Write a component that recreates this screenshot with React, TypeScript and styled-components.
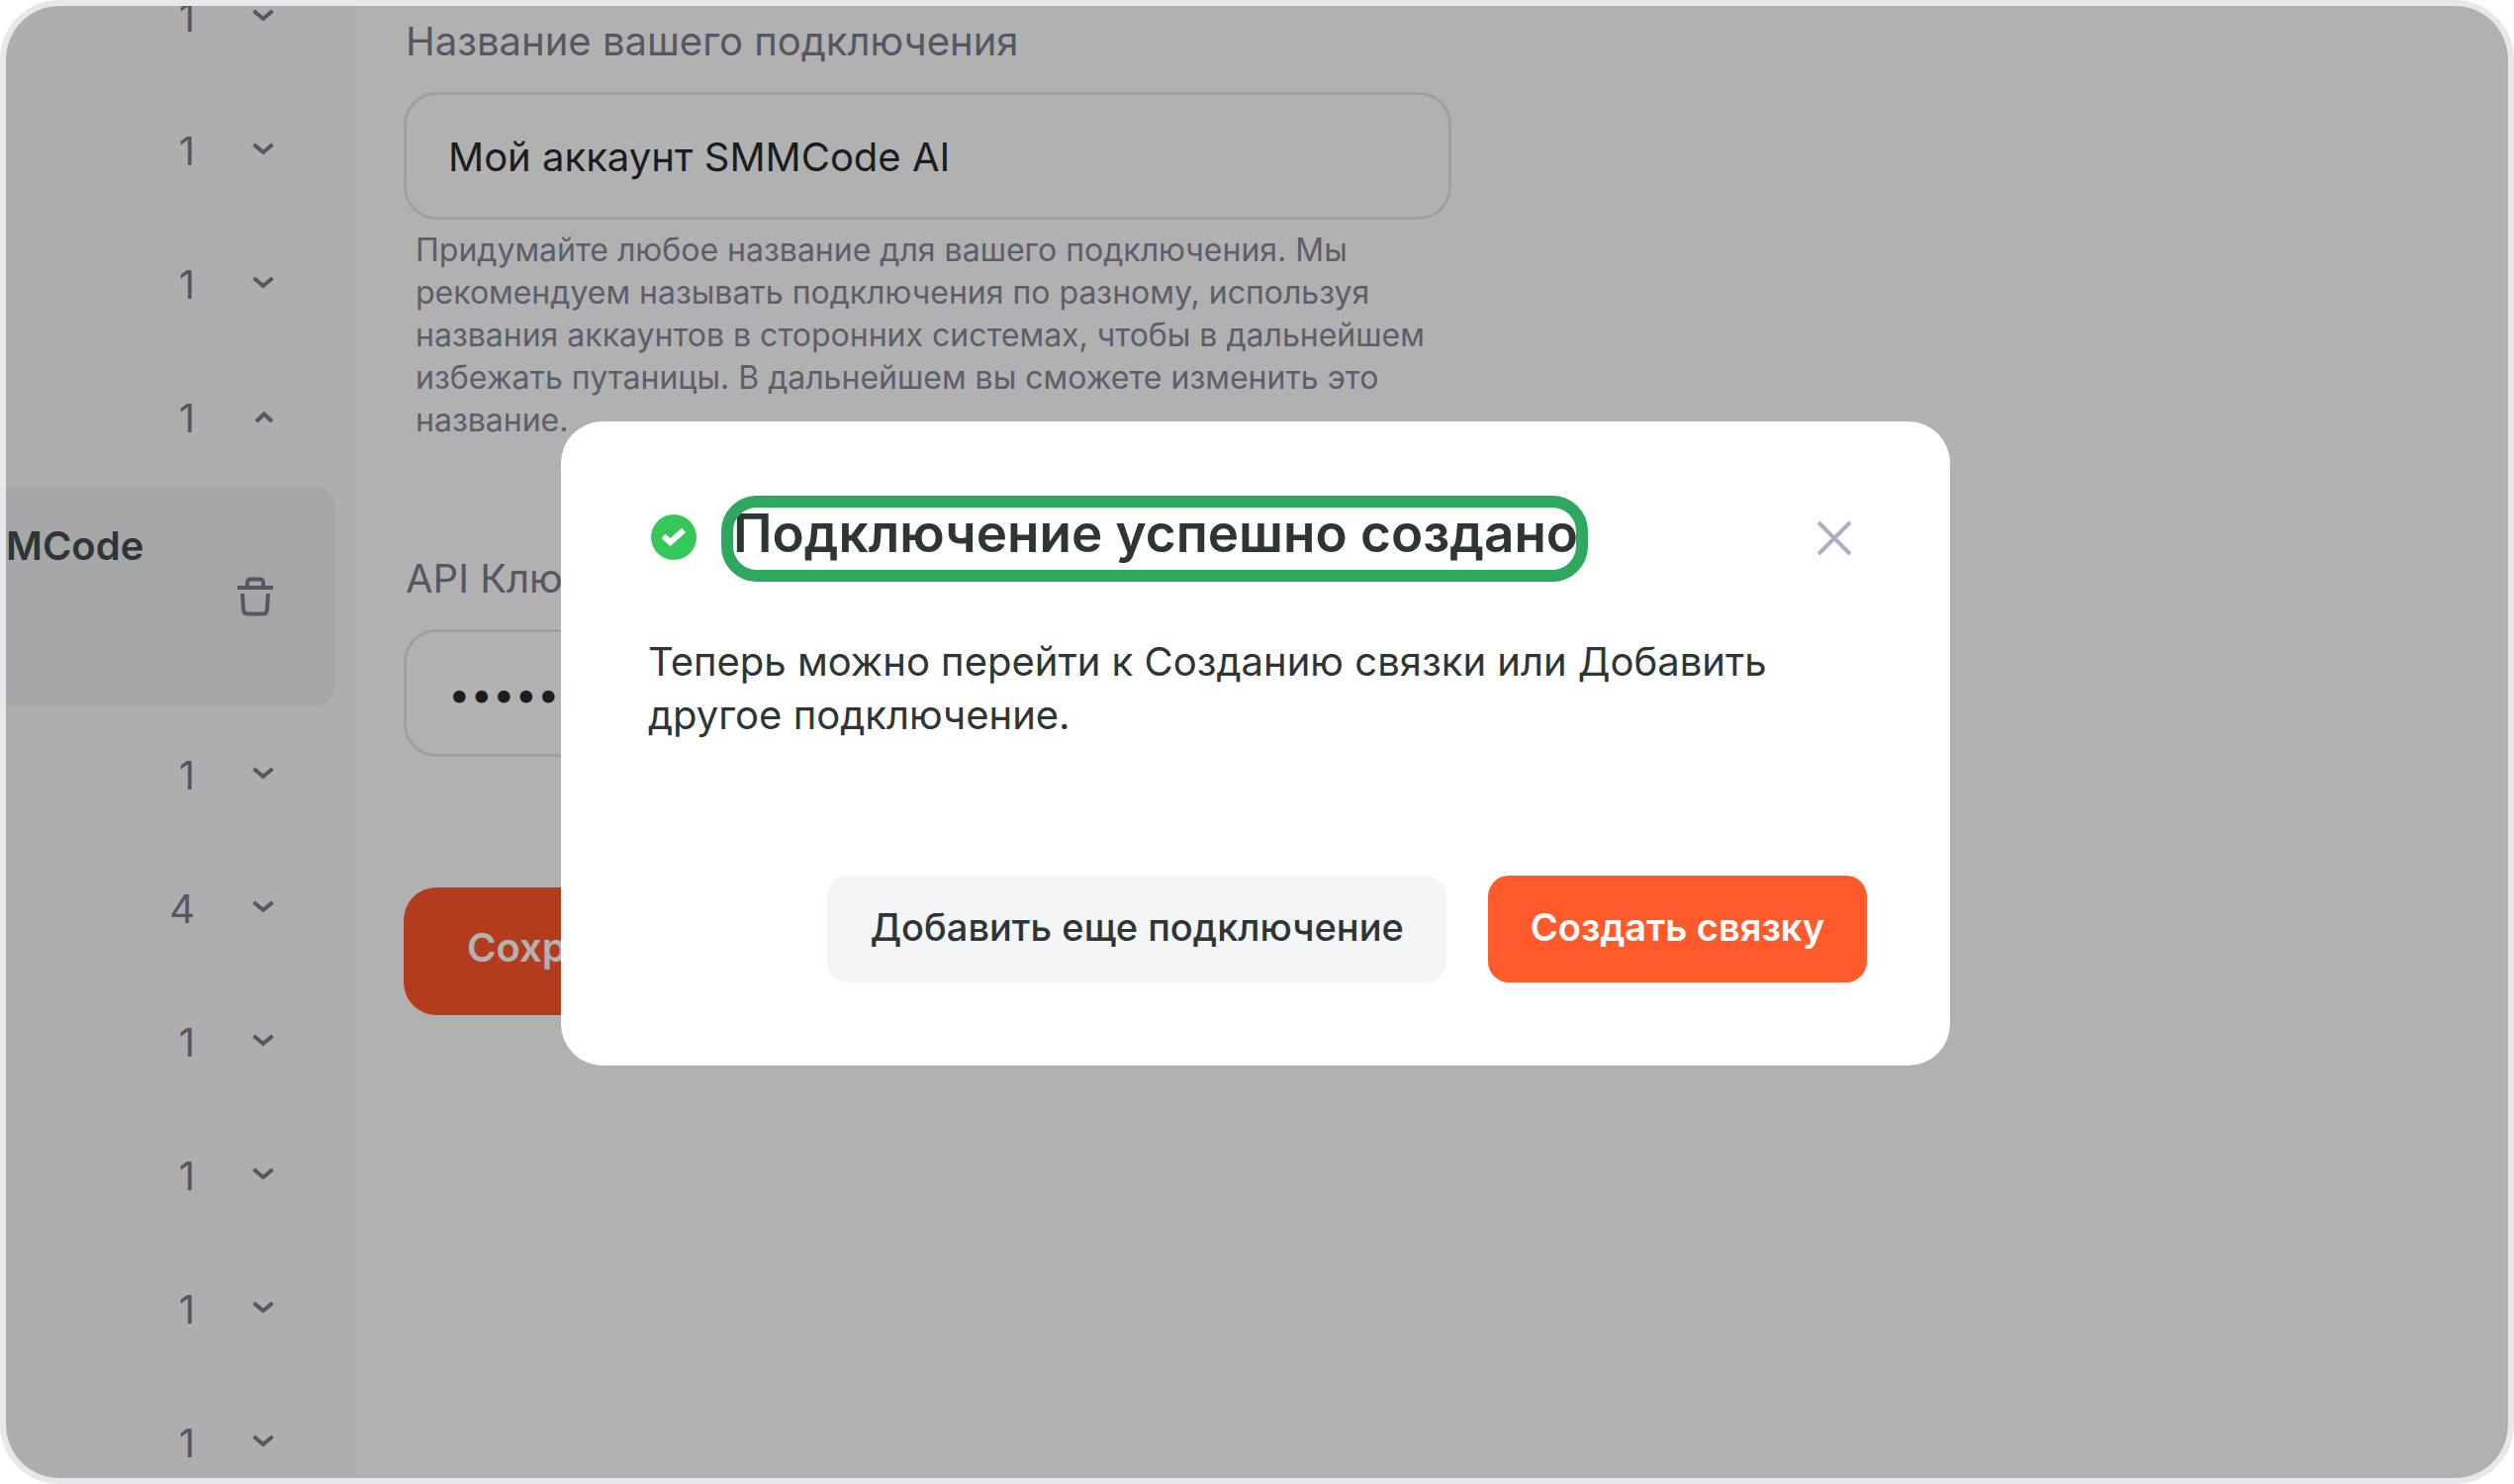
import React from "react";
import styled, { createGlobalStyle } from "styled-components";

const GlobalStyle = createGlobalStyle`
  *, *::before, *::after { box-sizing: border-box; }
  body { margin: 0; background: #ffffff; }
  body, button, input {
    font-family: Inter, "Liberation Sans", sans-serif;
    font-size: 40px;
    line-height: 54px;
  }
  button { border: 0; padding: 0; background: none; cursor: pointer; }
`;

const Frame = styled.div`
  position: relative;
  display: flex;
  height: 100vh;
  overflow: hidden;
  border: 6px solid #e6e8ed;
  border-radius: 60px;
  background: #fefefe;
`;

const Sidebar = styled.nav`
  flex: 0 0 354px;
  background: #f9f9f9;
  overflow: hidden;
`;

const GroupList = styled.ul`
  list-style: none;
  margin: -56px 0 0;
  padding: 0;
`;

const GroupToggle = styled.button`
  display: flex;
  align-items: center;
  justify-content: flex-end;
  gap: 57px;
  width: 100%;
  height: 135px;
  padding-right: 82px;
  color: #7b7d8e;
`;

const ActiveItem = styled.div`
  display: flex;
  justify-content: space-between;
  height: 222px;
  margin: 2px 21px 2px 0;
  padding: 33px 63px 0 0;
  border-radius: 0 21px 21px 0;
  background: #eceff1;
`;

const ActiveName = styled.span`
  font-weight: 600;
  color: #424c4c;
`;

const DeleteButton = styled.button`
  align-self: flex-start;
  display: flex;
  margin-top: 57px;
  color: #7b7d8e;
`;

const Main = styled.main`
  flex: 1;
  min-width: 0;
  padding: 9px 48px 0;
`;

const Form = styled.form`
  display: flex;
  flex-direction: column;
  align-items: flex-start;
  max-width: 1059px;
`;

const Field = styled.div<{ $space: number }>`
  display: flex;
  flex-direction: column;
  width: 100%;
  margin-bottom: ${(p) => p.$space}px;
`;

const Label = styled.label`
  margin-bottom: 24px;
  padding-left: 2px;
  color: #7b7d8e;
`;

const TextInput = styled.input`
  width: 100%;
  height: 129px;
  padding: 2px 42px 0;
  border: 3px solid #e3e3ea;
  border-radius: 33px;
  background: transparent;
  color: #262c2e;
  outline: none;
`;

const Hint = styled.p`
  margin: 9px 0 0;
  padding: 0 12px;
  font-size: 32px;
  line-height: 43px;
  color: #85879a;
`;

const SaveButton = styled.button`
  height: 129px;
  padding: 0 64px 8px;
  border-radius: 33px;
  background: #ff572a;
  color: #ffffff;
  font-weight: 600;
`;

const Overlay = styled.div`
  position: absolute;
  inset: 0;
  display: grid;
  place-items: center;
  padding: 3px 3px 0 0;
  background: rgba(0, 0, 0, 0.3);
`;

const Dialog = styled.section`
  width: 1404px;
  max-width: 100%;
  padding: 81px 84px 84px 86px;
  border-radius: 42px;
  background: #ffffff;
  color: #2d3535;
`;

const DialogHeader = styled.header`
  display: flex;
  align-items: flex-end;
`;

const Title = styled.h2`
  position: relative;
  margin: 0 auto 0 32px;
  font-size: 53px;
  line-height: 64px;
  font-weight: 600;
`;

const Highlight = styled.span`
  position: absolute;
  inset: -6px -10px -17px -12px;
  border: 12px solid #2ea85e;
  border-radius: 36px;
  pointer-events: none;
`;

const CloseButton = styled.button`
  display: flex;
  margin-right: 5px;
  color: #aab0c0;
`;

const Message = styled.p`
  margin: 71px 0 0;
  padding-left: 2px;
`;

const Actions = styled.footer`
  display: flex;
  justify-content: flex-end;
  gap: 42px;
  margin-top: 135px;
`;

const ActionButton = styled.button<{ $primary?: boolean }>`
  height: 108px;
  padding: 0 43px 5px;
  border-radius: 21px;
  font-size: 38px;
  font-weight: ${(p) => (p.$primary ? 600 : 500)};
  background: ${(p) => (p.$primary ? "#ff5a2c" : "#f3f5f7")};
  color: ${(p) => (p.$primary ? "#ffffff" : "#2d3535")};
`;

const Chevron = ({ open }: { open?: boolean }) => (
  <svg width="24" height="24" viewBox="0 0 24 24" fill="none" stroke="currentColor" strokeWidth="4" aria-hidden="true">
    <path d={open ? "M5 15 L13 7.500 L21 15" : "M2.500 5 L12 13 L21.500 5"} />
  </svg>
);

const TrashIcon = () => (
  <svg width="36" height="42" viewBox="0 0 36 42" fill="none" stroke="currentColor" strokeWidth="4" aria-hidden="true">
    <path d="M0 12 H36 M10 11 V7 Q10 3.500 13 3.500 H23 Q26 3.500 26 7 V11" />
    <path d="M5 18 L6 34 Q6.500 38.500 10 38.500 H26 Q29.500 38.500 30 34 L31 18" />
  </svg>
);

const SuccessIcon = () => (
  <svg width="56" height="56" viewBox="0 0 56 56" fill="none" aria-hidden="true">
    <circle cx="28" cy="28" r="23" fill="#34c759" />
    <path d="M17.500 27 L24.500 33 L38 21" stroke="#ffffff" strokeWidth="6" />
  </svg>
);

const CloseIcon = () => (
  <svg width="56" height="56" viewBox="0 0 56 56" fill="none" stroke="currentColor" strokeWidth="4" aria-hidden="true">
    <path d="M12 13 L44 45 M44 13 L12 45" />
  </svg>
);

type Group = { count: number; open?: boolean; item?: string };

const groups: Group[] = [
  { count: 1 },
  { count: 1 },
  { count: 1 },
  { count: 1, open: true, item: "MCode" },
  { count: 1 },
  { count: 4 },
  { count: 1 },
  { count: 1 },
  { count: 1 },
  { count: 1 },
];

export default function App() {
  return (
    <>
      <GlobalStyle />
      <Frame>
        <Sidebar>
          <GroupList>
            {groups.map((group, i) => (
              <li key={i}>
                <GroupToggle type="button" aria-expanded={!!group.open}>
                  <span>{group.count}</span>
                  <Chevron open={group.open} />
                </GroupToggle>
                {group.item && (
                  <ActiveItem>
                    <ActiveName>{group.item}</ActiveName>
                    <DeleteButton type="button" aria-label="Удалить">
                      <TrashIcon />
                    </DeleteButton>
                  </ActiveItem>
                )}
              </li>
            ))}
          </GroupList>
        </Sidebar>
        <Main>
          <Form onSubmit={(e) => e.preventDefault()}>
            <Field $space={112}>
              <Label htmlFor="name">Название вашего подключения</Label>
              <TextInput id="name" type="text" defaultValue="Мой аккаунт SMMCode AI" />
              <Hint>
                Придумайте любое название для вашего подключения. Мы рекомендуем называть подключения по разному,
                используя названия аккаунтов в сторонних системах, чтобы в дальнейшем избежать путаницы. В дальнейшем
                вы сможете изменить это название.
              </Hint>
            </Field>
            <Field $space={132}>
              <Label htmlFor="key">API Ключ</Label>
              <TextInput id="key" type="password" autoComplete="off" defaultValue="0123456789abcdef" />
            </Field>
            <SaveButton type="submit">Сохранить</SaveButton>
          </Form>
        </Main>
        <Overlay>
          <Dialog role="dialog" aria-modal="true" aria-labelledby="dialog-title">
            <DialogHeader>
              <SuccessIcon />
              <Title id="dialog-title">
                Подключение успешно создано
                <Highlight />
              </Title>
              <CloseButton type="button" aria-label="Закрыть">
                <CloseIcon />
              </CloseButton>
            </DialogHeader>
            <Message>Теперь можно перейти к Созданию связки или Добавить другое подключение.</Message>
            <Actions>
              <ActionButton type="button">Добавить еще подключение</ActionButton>
              <ActionButton type="button" $primary>
                Создать связку
              </ActionButton>
            </Actions>
          </Dialog>
        </Overlay>
      </Frame>
    </>
  );
}
